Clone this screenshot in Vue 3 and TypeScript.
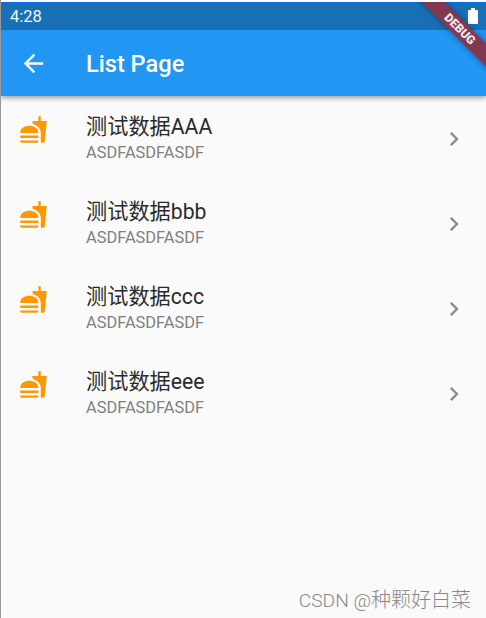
<script setup lang="ts">
interface Entry {
  title: string
  subtitle: string
}

const entries: Entry[] = ['AAA', 'bbb', 'ccc', 'eee'].map((suffix) => ({
  title: `测试数据${suffix}`,
  subtitle: 'ASDFASDFASDF',
}))
</script>

<template>
  <div class="screen">
    <header class="header">
      <div class="status">
        <span class="time">4:28</span>
        <svg class="battery" viewBox="0 0 10 16"><path d="M3 0h4v2h2q1 0 1 1v12q0 1-1 1H1q-1 0-1-1V3q0-1 1-1h2z" /></svg>
      </div>
      <div class="toolbar">
        <svg class="back" viewBox="0 0 24 24"><path d="M20 11H7.83l5.59-5.59L12 4l-8 8 8 8 1.41-1.41L7.83 13H20v-2z" /></svg>
        <h1 class="heading">List Page</h1>
      </div>
      <div class="ribbon">DEBUG</div>
    </header>
    <main class="list">
      <div v-for="entry in entries" :key="entry.title" class="row">
        <svg class="food" viewBox="0 0 24 24">
          <path d="M18.06 22.99h1.66c.84 0 1.53-.64 1.63-1.46L23 5.05h-5V1h-1.97v4.05h-4.97l.3 2.34c1.71.47 3.31 1.32 4.27 2.26 1.44 1.42 2.43 2.89 2.43 5.29v8.05zM1 21.99V21h15.03v.99c0 .55-.45 1-1.01 1H2.01c-.56 0-1.01-.45-1.01-1zm15.03-7c0-8-15.03-8-15.03 0h15.03zM1.02 17h15v2h-15z" />
        </svg>
        <div class="texts">
          <div class="title">{{ entry.title }}</div>
          <div class="subtitle">{{ entry.subtitle }}</div>
        </div>
        <svg class="chevron" viewBox="0 0 24 24"><path d="M10 6L8.59 7.41 13.17 12l-4.58 4.59L10 18l6-6z" /></svg>
      </div>
    </main>
    <footer class="watermark"><span class="site">CSDN @</span>种颗好白菜</footer>
  </div>
</template>

<style>
body {
  background: #fff;
}
</style>

<style scoped>
.screen {
  box-sizing: border-box;
  width: 486px;
  height: 618px;
  padding-top: 2px;
  border-left: 1px solid #999;
  display: flex;
  flex-direction: column;
  overflow: hidden;
  background: linear-gradient(#fff 2px, #fafafa 2px);
  font-family: Roboto, "Noto Sans CJK SC", sans-serif;
}
.header {
  position: relative;
  flex: none;
  height: 94px;
  background: #2196f3;
  box-shadow: 0 2px 5px rgba(0, 0, 0, 0.38);
  color: #fff;
  clip-path: inset(0 0 -12px 0);
}
.status {
  box-sizing: border-box;
  height: 28px;
  padding: 0 8px 0 9px;
  border-top: 1px solid #0568f5;
  background: #1a70b5;
  display: flex;
  align-items: center;
  justify-content: space-between;
}
.time {
  font-size: 16.5px;
  line-height: 26px;
  color: #eef5fa;
}
.battery {
  width: 10px;
  height: 16px;
  margin-top: -1px;
  fill: #fff;
}
.toolbar {
  height: 66px;
  padding-left: 18px;
  display: flex;
  align-items: center;
}
.back {
  width: 29px;
  height: 29px;
  fill: #fff;
}
.heading {
  margin: 2px 0 0 38px;
  font-size: 23.6px;
  font-weight: 500;
  line-height: 30px;
}
.ribbon {
  position: absolute;
  left: 398.5px;
  top: 19px;
  width: 120px;
  height: 15.5px;
  transform: rotate(45deg);
  background: #823850;
  box-shadow: 0 0 6px rgba(0, 0, 0, 0.42);
  font-size: 12px;
  font-weight: 900;
  line-height: 16px;
  text-align: center;
  color: #f3e7eb;
}
.list {
  flex: 1;
}
.row {
  box-sizing: border-box;
  height: 85px;
  padding: 19px 18px 0;
  display: flex;
  align-items: flex-start;
}
.food {
  width: 29px;
  height: 29px;
  fill: #ff9800;
}
.texts {
  flex: 1;
  margin-left: 38px;
}
.title {
  font-size: 21.2px;
  line-height: 23px;
  color: #2a2a2a;
}
.subtitle {
  font-size: 16.4px;
  line-height: 20px;
  margin-top: 5px;
  color: #808080;
}
.chevron {
  width: 28px;
  height: 28px;
  margin-top: 10px;
  fill: #8b8b8b;
}
.watermark {
  flex: none;
  padding: 0 15px 2px 0;
  font-family: "Noto Sans CJK SC", sans-serif;
  font-size: 20px;
  font-weight: 300;
  line-height: 30px;
  text-align: right;
  color: #888;
}
.site {
  font-family: Roboto, sans-serif;
  font-size: 19.2px;
}
</style>
